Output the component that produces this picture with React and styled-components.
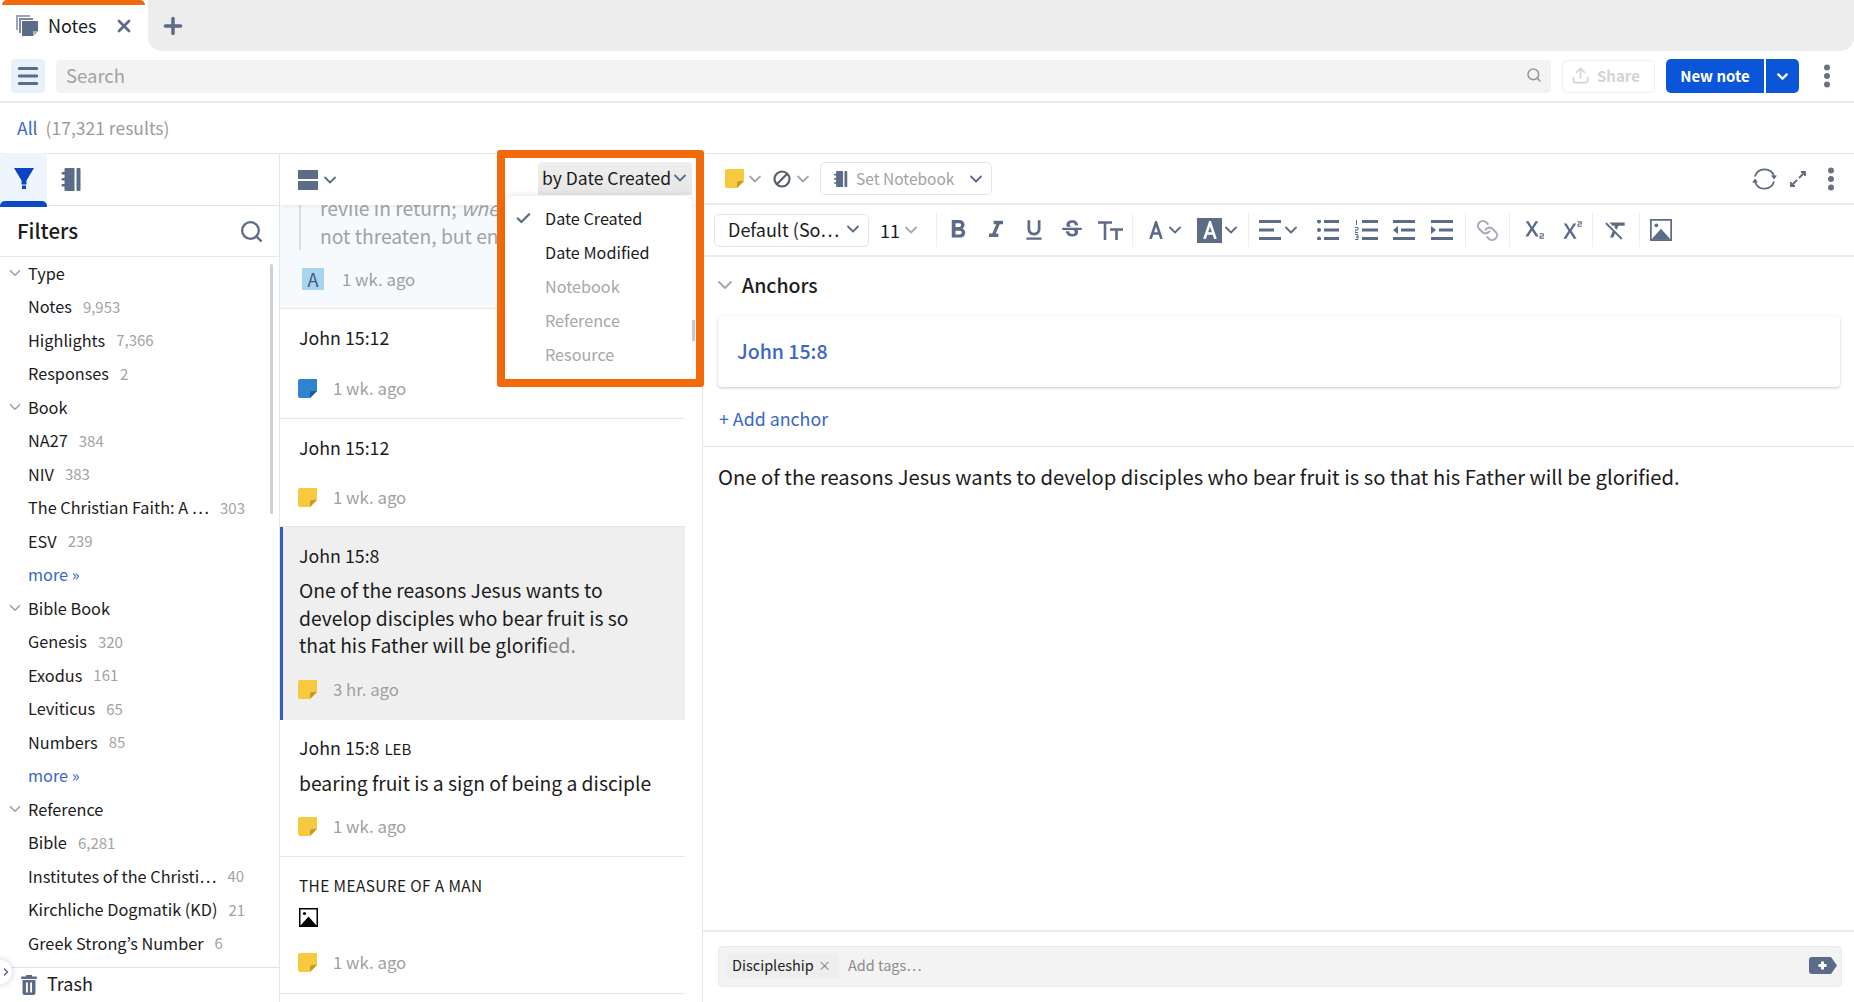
import React from "react";
import styled, { createGlobalStyle } from "styled-components";
import { Check, ChevronDown, ChevronRight, Link as LinkIcon, Menu, Plus, Search, Upload, X } from "lucide-react";
import {
  MdFormatBold,
  MdFormatClear,
  MdFormatItalic,
  MdFormatUnderlined,
  MdStrikethroughS,
  MdSubscript,
  MdSuperscript,
} from "react-icons/md";

const SLATE = "#5b6b88";

const GlobalStyle = createGlobalStyle`
  html, body, #root {
    margin: 0;
    height: 100%;
  }
  body {
    font-family: "Noto Sans CJK KR", "Noto Sans CJK SC", "Liberation Sans", sans-serif;
    color: #1c1c1c;
    background: #fff;
    overflow: hidden;
  }
`;

const Page = styled.div`
  height: 1002px;
  display: flex;
  flex-direction: column;
  position: relative;
  overflow: hidden;
`;

/* tab strip */
const TabBar = styled.div`
  height: 51px;
  display: flex;
  flex: none;
`;

const Tab = styled.div`
  width: 148px;
  position: relative;
  display: flex;
  align-items: center;
  padding: 0 0 0 16px;
  box-sizing: border-box;
  font-size: 18px;
  &::before {
    content: "";
    position: absolute;
    top: 0;
    left: 2px;
    width: 143px;
    height: 5px;
    background: #f26a0a;
    border-radius: 6px 6px 0 0;
  }
`;

const TabTitle = styled.span`
  margin-left: 10px;
  width: 66px;
  padding-bottom: 2px;
`;

const TabStrip = styled.div`
  flex: 1;
  background: #ededed;
  border-radius: 0 0 14px 14px;
  display: flex;
  align-items: center;
  padding-left: 12px;
  color: ${SLATE};
`;

/* search toolbar */
const Toolbar = styled.div`
  height: 52px;
  flex: none;
  box-sizing: border-box;
  border-bottom: 2px solid #ebebeb;
  display: flex;
  align-items: center;
  padding-left: 11px;
`;

const MenuButton = styled.div`
  width: 34px;
  height: 34px;
  border-radius: 4px;
  background: #e7f1fb;
  color: ${SLATE};
  display: flex;
  align-items: center;
  justify-content: center;
`;

const SearchBox = styled.div`
  flex: 1;
  height: 33px;
  box-sizing: border-box;
  margin-left: 11px;
  border-radius: 4px;
  background: #f3f3f3;
  color: #a2a2a2;
  display: flex;
  align-items: center;
  justify-content: space-between;
  padding: 0 9px 2px 10px;
  font-size: 18.500px;
`;

const ShareButton = styled.div`
  width: 93px;
  height: 33px;
  margin-left: 11px;
  box-sizing: border-box;
  border: 1px solid #efefef;
  border-radius: 5px;
  color: #d2d4d8;
  display: flex;
  align-items: center;
  gap: 7px;
  padding: 0 0 2px 8px;
  font-size: 15px;
  font-weight: 700;
`;

const SplitButton = styled.div`
  display: flex;
  margin-left: 11px;
  height: 34px;
  color: #fff;
  font-size: 15px;
  font-weight: 700;
`;

const SplitMain = styled.div`
  width: 98px;
  box-sizing: border-box;
  padding-bottom: 2px;
  background: #0b55d8;
  border-radius: 5px 0 0 5px;
  display: flex;
  align-items: center;
  justify-content: center;
`;

const SplitCaret = styled.div`
  width: 33px;
  margin-left: 2px;
  background: #0b55d8;
  border-radius: 0 5px 5px 0;
  display: flex;
  align-items: center;
  justify-content: center;
`;

const MoreButton = styled.div`
  width: ${(p) => p.$width || 55}px;
  flex: none;
  display: flex;
  justify-content: center;
  color: #6a7280;
`;

const ResultRow = styled.div`
  height: 51px;
  flex: none;
  box-sizing: border-box;
  border-bottom: 1px solid #e6e6e6;
  display: flex;
  align-items: center;
  padding: 0 0 2px 17px;
  font-size: 17.500px;
  color: #9c9c9c;
`;

const AllLink = styled.span`
  color: #3a66c8;
  margin-right: 8px;
`;

const Main = styled.div`
  flex: 1;
  display: flex;
  min-height: 0;
`;

/* left column */
const Sidebar = styled.aside`
  width: 280px;
  flex: none;
  box-sizing: border-box;
  border-right: 1px solid #e6e6e6;
  display: flex;
  flex-direction: column;
`;

const SideTabs = styled.div`
  height: 52px;
  flex: none;
  box-sizing: border-box;
  border-bottom: 1px solid #e2e2e2;
  display: flex;
  align-items: center;
`;

const FilterTab = styled.div`
  width: 47px;
  height: 53px;
  position: relative;
  background: #eef5fc;
  border-radius: 5px 5px 0 0;
  display: flex;
  justify-content: center;
  padding-top: 15px;
  box-sizing: border-box;
  &::after {
    content: "";
    position: absolute;
    left: 0;
    right: 0;
    bottom: -1px;
    height: 6px;
    background: #0b4ac4;
    border-radius: 5px 5px 0 0;
  }
`;

const NotebookTab = styled.div`
  margin-left: 13px;
  display: flex;
  color: ${SLATE};
`;

const FiltersHead = styled.div`
  height: 51px;
  flex: none;
  box-sizing: border-box;
  border-bottom: 1px solid #e6e6e6;
  display: flex;
  align-items: center;
  justify-content: space-between;
  padding: 0 15px 0 17px;
  font-size: 20.500px;
  font-weight: 500;
  color: ${SLATE};
`;

const FiltersTitle = styled.span`
  color: #1c1c1c;
  padding-bottom: 2px;
`;

const FilterList = styled.div`
  flex: 1;
  min-height: 0;
  position: relative;
  overflow: hidden;
`;

const FilterRow = styled.div`
  height: 33.5px;
  box-sizing: border-box;
  display: flex;
  align-items: center;
  padding: 0 0 2px ${(p) => (p.$head ? 6 : 28)}px;
  font-size: 16.300px;
  white-space: nowrap;
`;

const RowChevron = styled(ChevronDown)`
  width: 18px;
  height: 18px;
  margin-right: 4px;
  color: #9ca3af;
`;

const Count = styled.span`
  margin-left: 11px;
  font-size: 15px;
  color: #a3a3a3;
`;

const MoreLink = styled.span`
  color: #3a66c8;
`;

const ScrollThumb = styled.div`
  position: absolute;
  top: 7px;
  left: 270px;
  width: 3px;
  height: 250px;
  border-radius: 2px;
  background: #d0d0d0;
`;

const TrashRow = styled.div`
  height: 35px;
  flex: none;
  box-sizing: border-box;
  border-top: 1px solid #e2e2e2;
  display: flex;
  align-items: center;
  gap: 10px;
  padding: 0 0 1px 21px;
  font-size: 18px;
  color: ${SLATE};
`;

const TrashLabel = styled.span`
  color: #1c1c1c;
  padding-bottom: 4px;
`;

const ExpandHandle = styled.div`
  position: absolute;
  left: -12px;
  top: 960px;
  width: 24px;
  height: 24px;
  border-radius: 50%;
  background: #fff;
  box-shadow: 0 0 6px rgba(0, 0, 0, 0.2);
  display: flex;
  align-items: center;
  justify-content: flex-end;
  color: ${SLATE};
`;

/* notes column */
const NotesColumn = styled.section`
  width: 423px;
  flex: none;
  box-sizing: border-box;
  border-right: 1px solid #e6e6e6;
  display: flex;
  flex-direction: column;
`;

const NotesHead = styled.div`
  height: 51px;
  flex: none;
  display: flex;
  align-items: center;
  padding-left: 18px;
  gap: 3px;
  position: relative;
  z-index: 1;
  background: #fff;
  box-shadow: 0 3px 4px -2px rgba(0, 0, 0, 0.08);
  color: ${SLATE};
`;

const NotesList = styled.div`
  flex: 1;
  min-height: 0;
  width: 405px;
  overflow: hidden;
`;

const NoteItem = styled.div`
  box-sizing: border-box;
  height: ${(p) => p.$height}px;
  padding-left: ${(p) => (p.$selected ? 16 : 19)}px;
  border-bottom: ${(p) => (p.$selected ? "none" : "1px solid #e8e8e8")};
  border-left: ${(p) => (p.$selected ? "3px solid #2f5fbe" : "none")};
  background: ${(p) => (p.$selected ? "#efefef" : p.$tint ? "#f6fafd" : "#fff")};
  display: flex;
  flex-direction: column;
  justify-content: flex-end;
  padding-bottom: ${(p) => p.$bottom || 19}px;
  overflow: hidden;
`;

const NoteTitle = styled.div`
  font-size: 17.800px;
  line-height: 26px;
  margin-bottom: ${(p) => p.$gap || 0}px;
`;

const SourceTag = styled.span`
  font-size: 15px;
  margin-left: 1px;
`;

const CapsTitle = styled.div`
  font-size: 15.400px;
  letter-spacing: 0.4px;
  line-height: 24px;
  margin-bottom: 11px;
`;

const NoteText = styled.div`
  font-size: 19.300px;
  line-height: 27.700px;
  margin-bottom: ${(p) => p.$gap || 18}px;
`;

const FadeText = styled.span`
  color: #8a8a8a;
`;

const QuoteText = styled.div`
  font-size: 19.300px;
  line-height: 28px;
  color: #a2a2a2;
  white-space: nowrap;
  border-left: 2px solid #dcdcdc;
  padding-left: 19px;
  margin-bottom: 18px;
`;

const NoteMeta = styled.div`
  display: flex;
  align-items: center;
  height: 22px;
  margin-left: -1px;
  gap: ${(p) => p.$gap || 16}px;
  font-size: 16.800px;
  color: #9f9f9f;
`;

const LetterBadge = styled.span`
  width: 22px;
  height: 22px;
  flex: none;
  margin-left: 4px;
  background: #a9d4f1;
  color: #3a5a78;
  font-size: 18px;
  line-height: 22px;
  text-align: center;
`;

const ImageSlot = styled.div`
  height: 19px;
  margin-bottom: 24px;
  display: flex;
`;

/* sort menu over the list */
const Highlight = styled.div`
  position: absolute;
  left: 497px;
  top: 150px;
  width: 207px;
  height: 237px;
  box-sizing: border-box;
  border: 8px solid #f26a0a;
  border-radius: 3px;
  z-index: 3;
`;

const SortButton = styled.div`
  position: absolute;
  left: 33px;
  top: 4px;
  width: 154px;
  height: 33px;
  border-radius: 4px 4px 0 0;
  background: linear-gradient(#efefef, #e6e6e6);
  display: flex;
  align-items: center;
  padding: 0 0 2px 4px;
  box-sizing: border-box;
  font-size: 17.500px;
  white-space: nowrap;
`;

const SortMenu = styled.div`
  position: absolute;
  left: 0;
  top: 38px;
  width: 187px;
  height: 183px;
  background: #fff;
  border-radius: 8px 8px 8px 0;
  box-shadow: 0 -2px 6px rgba(0, 0, 0, 0.08);
  padding-top: 5px;
  box-sizing: border-box;
`;

const SortOption = styled.div`
  height: 34px;
  display: flex;
  align-items: center;
  padding-left: 40px;
  position: relative;
  font-size: 16.200px;
  color: ${(p) => (p.$muted ? "#a8a8a8" : "#1c1c1c")};
`;

const SortCheck = styled(Check)`
  position: absolute;
  left: 10px;
  top: 9px;
  width: 17px;
  height: 17px;
  color: ${SLATE};
`;

const MenuThumb = styled.div`
  position: absolute;
  right: -3px;
  top: 124px;
  width: 3px;
  height: 21px;
  background: #c9c9c9;
`;

/* editor column */
const Editor = styled.section`
  flex: 1;
  min-width: 0;
  display: flex;
  flex-direction: column;
`;

const EditorBar = styled.div`
  height: ${(p) => p.$height}px;
  flex: none;
  box-sizing: border-box;
  border-bottom: 2px solid #ebebeb;
  display: flex;
  align-items: center;
  padding-left: 11px;
  color: ${SLATE};
`;

const IconPick = styled.div`
  display: flex;
  align-items: center;
  gap: ${(p) => p.$inner || 2}px;
  margin-left: ${(p) => p.$gap || 0}px;
  color: ${SLATE};
`;

const MutedChevron = styled(ChevronDown)`
  width: 20px;
  height: 20px;
  margin: 0 -1.500px;
  flex: none;
  color: ${(p) => p.$tone || "#a3a9b3"};
  stroke-width: 2.200;
`;

const NotebookSelect = styled.div`
  width: 172px;
  height: 33px;
  margin-left: 9px;
  box-sizing: border-box;
  border: 1px solid #e4e4e4;
  border-radius: 5px;
  display: flex;
  align-items: center;
  padding: 0 7px 0 12px;
  gap: 7px;
  color: ${SLATE};
  font-size: 15.500px;
  white-space: nowrap;
`;

const NotebookLabel = styled.span`
  flex: 1;
  color: #a3a3a3;
  padding-bottom: 2px;
`;

const BarRight = styled.div`
  margin-left: auto;
  display: flex;
  align-items: center;
  gap: 12px;
  padding-right: 11px;
`;

const FontSelect = styled.div`
  width: 155px;
  height: 33px;
  flex: none;
  box-sizing: border-box;
  border: 1px solid #e4e4e4;
  border-radius: 5px;
  display: flex;
  align-items: center;
  justify-content: space-between;
  padding: 0 7px 2px 13px;
  font-size: 18px;
  color: #1c1c1c;
  white-space: nowrap;
`;

const SizePick = styled.div`
  width: 39px;
  flex: none;
  margin-left: 11px;
  display: flex;
  align-items: center;
  justify-content: space-between;
  font-size: 18px;
  color: #1c1c1c;
`;

const Divider = styled.span`
  width: 1px;
  height: 34px;
  flex: none;
  background: #eeeeee;
  margin-left: ${(p) => p.$gap || 0}px;
`;

const Tool = styled.span`
  width: ${(p) => p.$width || 38}px;
  height: 30px;
  flex: none;
  margin-left: ${(p) => p.$gap || 0}px;
  display: flex;
  align-items: center;
  justify-content: center;
  gap: ${(p) => p.$inner || 0}px;
  color: ${(p) => p.$tone || SLATE};
`;

const MarkedLetter = styled.span`
  width: 25px;
  height: 25px;
  flex: none;
  background: ${SLATE};
  display: flex;
  align-items: center;
  justify-content: center;
`;

const ChainIcon = styled(LinkIcon)`
  transform: scaleX(-1);
`;

const AnchorSection = styled.div`
  height: 190px;
  flex: none;
  box-sizing: border-box;
  border-bottom: 1px solid #e8e8e8;
  padding: 0 14px 0 15px;
  display: flex;
  flex-direction: column;
`;

const AnchorHead = styled.div`
  height: 59px;
  flex: none;
  box-sizing: border-box;
  display: flex;
  align-items: center;
  gap: 5px;
  padding-bottom: 4px;
  font-size: 19.500px;
  font-weight: 500;
`;

const AnchorChevron = styled(ChevronDown)`
  width: 24px;
  height: 24px;
  margin-left: -5px;
  flex: none;
  color: #a3a9b3;
  stroke-width: 2;
`;

const AnchorCard = styled.div`
  height: 71px;
  flex: none;
  box-sizing: border-box;
  border-radius: 4px;
  background: #fff;
  box-shadow: 0 1px 3px rgba(0, 0, 0, 0.22);
  display: flex;
  align-items: center;
  padding: 0 0 2px 19px;
  font-size: 19.500px;
  font-weight: 500;
  color: #3a66c8;
`;

const AddAnchor = styled.div`
  margin: 18px 0 0 1px;
  font-size: 17.800px;
  line-height: 26px;
  color: #3a66c8;
`;

const EditorBody = styled.div`
  flex: 1;
  min-height: 0;
  padding: 15px 15px 0;
  font-size: 20.200px;
  line-height: 29px;
`;

const TagsBar = styled.div`
  height: 72px;
  flex: none;
  box-sizing: border-box;
  border-top: 2px solid #ebebeb;
  padding: 14px 12px 15px 15px;
`;

const TagsBox = styled.div`
  height: 41px;
  box-sizing: border-box;
  border: 1px solid #eaeaea;
  border-radius: 4px;
  background: #f3f3f3;
  display: flex;
  align-items: center;
  padding: 0 4px 2px 8px;
  font-size: 14.500px;
  color: #8d8d8d;
`;

const TagChip = styled.span`
  height: 25px;
  width: 112px;
  box-sizing: border-box;
  border-radius: 4px;
  background: #eeeeee;
  color: #1c1c1c;
  display: flex;
  align-items: center;
  justify-content: space-between;
  padding: 0 8px 3px 5px;
  margin-right: 9px;
`;

const AddTags = styled.span`
  padding-bottom: 3px;
`;

const TagClose = styled.span`
  font-size: 13px;
  color: #777;
`;

const TagPlus = styled.span`
  margin-left: auto;
  display: flex;
`;

/* drawings */
const StickyNote = ({ tone = "#f6c93f", fold = "#c69a2b" }) => (
  <svg width="19" height="19" viewBox="0 0 19 19">
    <path d="M2 0h17v12l-7 7H2a2 2 0 0 1-2-2V2a2 2 0 0 1 2-2z" fill={tone} />
    <path d="M12 19v-5a2 2 0 0 1 2-2h5z" fill={fold} />
  </svg>
);

const ThreeDots = () => (
  <svg width="6" height="24" viewBox="0 0 6 24" fill="currentColor">
    <circle cx="3" cy="3.500" r="3" />
    <circle cx="3" cy="12" r="3" />
    <circle cx="3" cy="20.500" r="3" />
  </svg>
);

const PagesIcon = () => (
  <svg width="22" height="21" viewBox="0 0 22 21" fill={SLATE}>
    <path d="M0 0h14v2H2v13H0z" opacity="0.6" />
    <path d="M3 3h14v2H5v13H3z" opacity="0.8" />
    <path d="M6 6h16v10l-5 5H6z" />
    <path d="M17 21v-5h5z" fill="#a9b2c2" />
  </svg>
);

const FunnelIcon = () => (
  <svg width="20" height="21" viewBox="0 0 20 21" fill="#0b45c4">
    <path d="M0 0h20l-7.500 12.500v4h-5v-4z" />
    <rect x="8" y="17.500" width="4" height="3.500" />
  </svg>
);

const NotebookIcon = ({ size = 23, tint = SLATE }) => (
  <svg width={size} height={size} viewBox="0 0 20 23" fill={tint}>
    <path d="M3 1a1 1 0 0 1 1-1h9v23H4a1 1 0 0 1-1-1z" />
    <rect x="15" y="0" width="4" height="23" rx="1" />
    <rect x="0" y="4" width="5" height="2.400" rx="1" />
    <rect x="0" y="10" width="5" height="2.400" rx="1" />
    <rect x="0" y="16" width="5" height="2.400" rx="1" />
  </svg>
);

const LayoutIcon = () => (
  <svg width="20" height="20" viewBox="0 0 20 20" fill={SLATE}>
    <rect x="0" y="0" width="20" height="9" />
    <rect x="0" y="11" width="20" height="9" />
  </svg>
);

const TrashIcon = () => (
  <svg width="16" height="20" viewBox="0 0 16 20" fill="currentColor">
    <rect x="0" y="1.500" width="16" height="2.500" rx="1" />
    <rect x="5" y="0" width="6" height="2" />
    <path d="M1.500 5h13v13a2 2 0 0 1-2 2h-9a2 2 0 0 1-2-2z" />
    <rect x="5" y="7.500" width="1.800" height="10" fill="#fff" />
    <rect x="9.200" y="7.500" width="1.800" height="10" fill="#fff" />
  </svg>
);

const BrokenImage = ({ frame = "#000", size = 19 }) => (
  <svg width={size} height={size} viewBox="0 0 19 19">
    <rect x="0.750" y="0.750" width="17.500" height="17.500" fill="#fff" stroke={frame} strokeWidth="1.500" />
    <circle cx="5.500" cy="5.500" r="1.600" fill={frame} />
    <path d="M1 18l8.500-9.500L18 18z" fill={frame} />
  </svg>
);

const BanIcon = () => (
  <svg width="18" height="18" viewBox="0 0 18 18" fill="none" stroke="#55606f" strokeWidth="2.200">
    <circle cx="9" cy="9" r="7.500" />
    <path d="M3.800 14.200L14.200 3.800" />
  </svg>
);

const RefreshIcon = () => (
  <svg width="25" height="24" viewBox="0 0 25 24" fill="none" stroke="#5f6b7d" strokeWidth="1.800">
    <path d="M3 9.500A10 10 0 0 1 22 9" />
    <path d="M22 14.500A10 10 0 0 1 3 15" />
    <path d="M19 8.500h6l-3 4z" fill="#5f6b7d" stroke="none" />
    <path d="M0 15.500h6l-3-4z" fill="#5f6b7d" stroke="none" />
  </svg>
);

const ExpandIcon = () => (
  <svg width="18" height="18" viewBox="0 0 18 18" fill="none" stroke="#5f6b7d" strokeWidth="1.800">
    <path d="M12 2h4v4M16 2l-6 6" />
    <path d="M6 16H2v-4M2 16l6-6" />
  </svg>
);

const LetterA = ({ tone = "currentColor" }) => (
  <svg width="14" height="18" viewBox="0 0 14 18" fill="none" stroke={tone} strokeWidth="2.600">
    <path d="M1.500 18L7 1.500 12.500 18M3.500 12.500h7" />
  </svg>
);

const TextSizeIcon = () => (
  <svg width="25" height="19" viewBox="0 0 25 19" fill="none" stroke="currentColor" strokeWidth="2.600">
    <path d="M0 1.500h14M7 1.500V19" />
    <path d="M12 8.500h13M18.500 8.500V19" />
  </svg>
);

const AlignIcon = () => (
  <svg width="22" height="20" viewBox="0 0 22 20" fill="currentColor">
    <rect y="0" width="22" height="3" />
    <rect y="8.500" width="15" height="3" />
    <rect y="17" width="22" height="3" />
  </svg>
);

const BulletIcon = () => (
  <svg width="22" height="20" viewBox="0 0 22 20" fill="currentColor">
    <circle cx="2" cy="1.500" r="2" />
    <circle cx="2" cy="10" r="2" />
    <circle cx="2" cy="18.500" r="2" />
    <rect x="7" y="0" width="15" height="3" />
    <rect x="7" y="8.500" width="15" height="3" />
    <rect x="7" y="17" width="15" height="3" />
  </svg>
);

const NumberedIcon = () => (
  <svg width="23" height="20" viewBox="0 0 23 20" fill="currentColor">
    <path d="M1.500 0v5M0 7.500h3v2.500H0v2.500h3M0 14.500h3v2.500H1h2v2.500H0" fill="none" stroke="currentColor" strokeWidth="1" />
    <rect x="7" y="0" width="16" height="3" />
    <rect x="7" y="8.500" width="16" height="3" />
    <rect x="7" y="17" width="16" height="3" />
  </svg>
);

const IndentIcon = ({ out }) => (
  <svg width="22" height="20" viewBox="0 0 22 20" fill="currentColor">
    <rect width="22" height="3" />
    <rect x="8" y="8.500" width="14" height="3" />
    <rect y="17" width="22" height="3" />
    <path d={out ? "M0 10l5-4v8z" : "M5 10L0 6v8z"} />
  </svg>
);

const TagPlusIcon = () => (
  <svg width="28" height="17" viewBox="0 0 28 17">
    <path d="M3 0h19l6 8.500-6 8.500H3a3 3 0 0 1-3-3V3a3 3 0 0 1 3-3z" fill={SLATE} />
    <path d="M12 4.500h3v2.500h2.500v3H15v2.500h-3V10H9.500V7H12z" fill="#fff" />
  </svg>
);

const filterGroups = [
  {
    title: "Type",
    rows: [["Notes", "9,953"], ["Highlights", "7,366"], ["Responses", "2"]],
  },
  {
    title: "Book",
    rows: [["NA27", "384"], ["NIV", "383"], ["The Christian Faith: A …", "303"], ["ESV", "239"]],
    more: true,
  },
  {
    title: "Bible Book",
    rows: [["Genesis", "320"], ["Exodus", "161"], ["Leviticus", "65"], ["Numbers", "85"]],
    more: true,
  },
  {
    title: "Reference",
    rows: [
      ["Bible", "6,281"],
      ["Institutes of the Christi…", "40"],
      ["Kirchliche Dogmatik (KD)", "21"],
      ["Greek Strong’s Number", "6"],
    ],
  },
];

const sortOptions = [
  { label: "Date Created", checked: true },
  { label: "Date Modified" },
  { label: "Notebook", muted: true },
  { label: "Reference", muted: true },
  { label: "Resource", muted: true },
];

const App = () => {
  return (
    <Page>
      <GlobalStyle />

      <TabBar>
        <Tab>
          <PagesIcon />
          <TabTitle>Notes</TabTitle>
          <X size={20} strokeWidth={3.2} color={SLATE} />
        </Tab>
        <TabStrip>
          <Plus size={26} strokeWidth={3.2} />
        </TabStrip>
      </TabBar>

      <Toolbar>
        <MenuButton>
          <Menu size={26} strokeWidth={2.8} />
        </MenuButton>
        <SearchBox>
          Search
          <Search size={16} strokeWidth={2.4} color="#9a9a9a" />
        </SearchBox>
        <ShareButton>
          <Upload size={19} strokeWidth={2} />
          Share
        </ShareButton>
        <SplitButton>
          <SplitMain>New note</SplitMain>
          <SplitCaret>
            <ChevronDown size={17} strokeWidth={3} />
          </SplitCaret>
        </SplitButton>
        <MoreButton>
          <ThreeDots />
        </MoreButton>
      </Toolbar>

      <ResultRow>
        <AllLink>All</AllLink>
        (17,321 results)
      </ResultRow>

      <Main>
        <Sidebar>
          <SideTabs>
            <FilterTab>
              <FunnelIcon />
            </FilterTab>
            <NotebookTab>
              <NotebookIcon />
            </NotebookTab>
          </SideTabs>
          <FiltersHead>
            <FiltersTitle>Filters</FiltersTitle>
            <Search size={25} strokeWidth={2.2} />
          </FiltersHead>
          <FilterList>
            <ScrollThumb />
            {filterGroups.map((group) => (
              <div key={group.title}>
                <FilterRow $head>
                  <RowChevron strokeWidth={2.2} />
                  {group.title}
                </FilterRow>
                {group.rows.map(([name, count]) => (
                  <FilterRow key={name}>
                    {name}
                    <Count>{count}</Count>
                  </FilterRow>
                ))}
                {group.more && (
                  <FilterRow>
                    <MoreLink>more »</MoreLink>
                  </FilterRow>
                )}
              </div>
            ))}
          </FilterList>
          <TrashRow>
            <TrashIcon />
            <TrashLabel>Trash</TrashLabel>
          </TrashRow>
        </Sidebar>

        <NotesColumn>
          <NotesHead>
            <LayoutIcon />
            <MutedChevron $tone={SLATE} />
          </NotesHead>
          <NotesList>
            <NoteItem $height={104} $tint $bottom={18}>
              <QuoteText>
                revile in return; <i>whe</i>
                <br />
                not threaten, but en
              </QuoteText>
              <NoteMeta $gap={18}>
                <LetterBadge>A</LetterBadge>1 wk. ago
              </NoteMeta>
            </NoteItem>
            <NoteItem $height={110} $bottom={19}>
              <NoteTitle $gap={27}>John 15:12</NoteTitle>
              <NoteMeta>
                <StickyNote tone="#2f84cf" fold="#1c5c9c" />1 wk. ago
              </NoteMeta>
            </NoteItem>
            <NoteItem $height={108} $bottom={18}>
              <NoteTitle $gap={26}>John 15:12</NoteTitle>
              <NoteMeta>
                <StickyNote />1 wk. ago
              </NoteMeta>
            </NoteItem>
            <NoteItem $height={193} $selected $bottom={20}>
              <NoteTitle $gap={9}>John 15:8</NoteTitle>
              <NoteText>
                One of the reasons Jesus wants to
                <br />
                develop disciples who bear fruit is so
                <br />
                that his Father will be glorifi<FadeText>ed.</FadeText>
              </NoteText>
              <NoteMeta>
                <StickyNote />3 hr. ago
              </NoteMeta>
            </NoteItem>
            <NoteItem $height={137} $bottom={19}>
              <NoteTitle $gap={8}>
                John 15:8 <SourceTag>LEB</SourceTag>
              </NoteTitle>
              <NoteText $gap={17}>bearing fruit is a sign of being a disciple</NoteText>
              <NoteMeta>
                <StickyNote />1 wk. ago
              </NoteMeta>
            </NoteItem>
            <NoteItem $height={137} $bottom={20}>
              <CapsTitle>THE MEASURE OF A MAN</CapsTitle>
              <ImageSlot>
                <BrokenImage />
              </ImageSlot>
              <NoteMeta>
                <StickyNote />1 wk. ago
              </NoteMeta>
            </NoteItem>
          </NotesList>
        </NotesColumn>

        <Editor>
          <EditorBar $height={51}>
            <IconPick $gap={11}>
              <StickyNote />
              <MutedChevron />
            </IconPick>
            <IconPick $gap={10} $inner={3}>
              <BanIcon />
              <MutedChevron />
            </IconPick>
            <NotebookSelect>
              <NotebookIcon size={16} />
              <NotebookLabel>Set Notebook</NotebookLabel>
              <MutedChevron $tone={SLATE} />
            </NotebookSelect>
            <BarRight>
              <RefreshIcon />
              <ExpandIcon />
              <MoreButton $width={24}>
                <ThreeDots />
              </MoreButton>
            </BarRight>
          </EditorBar>

          <EditorBar $height={52}>
            <FontSelect>
              Default (So…
              <MutedChevron $tone={SLATE} />
            </FontSelect>
            <SizePick>
              11
              <MutedChevron />
            </SizePick>
            <Divider $gap={17} />
            <Tool $gap={2}><MdFormatBold size={30} /></Tool>
            <Tool><MdFormatItalic size={28} /></Tool>
            <Tool><MdFormatUnderlined size={26} /></Tool>
            <Tool><MdStrikethroughS size={26} /></Tool>
            <Tool><TextSizeIcon /></Tool>
            <Divider $gap={3} />
            <Tool $gap={14} $width={38} $inner={4}><LetterA /><MutedChevron $tone={SLATE} /></Tool>
            <Tool $gap={14} $width={38} $inner={0}>
              <MarkedLetter><LetterA tone="#fff" /></MarkedLetter>
              <MutedChevron $tone={SLATE} />
            </Tool>
            <Divider $gap={11} />
            <Tool $gap={10} $width={40} $inner={1}><AlignIcon /><MutedChevron $tone={SLATE} /></Tool>
            <Tool $gap={10}><BulletIcon /></Tool>
            <Tool><NumberedIcon /></Tool>
            <Tool><IndentIcon out /></Tool>
            <Tool><IndentIcon /></Tool>
            <Divider $gap={4} />
            <Tool $tone="#a8aeb8" $gap={0} $width={43}><ChainIcon size={23} strokeWidth={2.2} /></Tool>
            <Divider />
            <Tool $gap={3}><MdSubscript size={26} /></Tool>
            <Tool><MdSuperscript size={26} /></Tool>
            <Divider $gap={3} />
            <Tool $width={46}><MdFormatClear size={26} /></Tool>
            <Divider />
            <Tool $width={42}><BrokenImage frame={SLATE} size={22} /></Tool>
          </EditorBar>

          <AnchorSection>
            <AnchorHead>
              <AnchorChevron />
              Anchors
            </AnchorHead>
            <AnchorCard>John 15:8</AnchorCard>
            <AddAnchor>+ Add anchor</AddAnchor>
          </AnchorSection>

          <EditorBody>
            One of the reasons Jesus wants to develop disciples who bear fruit is so that his Father will be glorified.
          </EditorBody>

          <TagsBar>
            <TagsBox>
              <TagChip>
                Discipleship
                <TagClose>×</TagClose>
              </TagChip>
              <AddTags>Add tags…</AddTags>
              <TagPlus>
                <TagPlusIcon />
              </TagPlus>
            </TagsBox>
          </TagsBar>
        </Editor>
      </Main>

      <ExpandHandle>
        <ChevronRight size={12} strokeWidth={3} />
      </ExpandHandle>

      <Highlight>
        <SortButton>
          by Date Created
          <MutedChevron $tone={SLATE} />
        </SortButton>
        <SortMenu>
          {sortOptions.map((option) => (
            <SortOption key={option.label} $muted={option.muted}>
              {option.checked && <SortCheck strokeWidth={3.2} />}
              {option.label}
            </SortOption>
          ))}
          <MenuThumb />
        </SortMenu>
      </Highlight>
    </Page>
  );
};

export default App;
